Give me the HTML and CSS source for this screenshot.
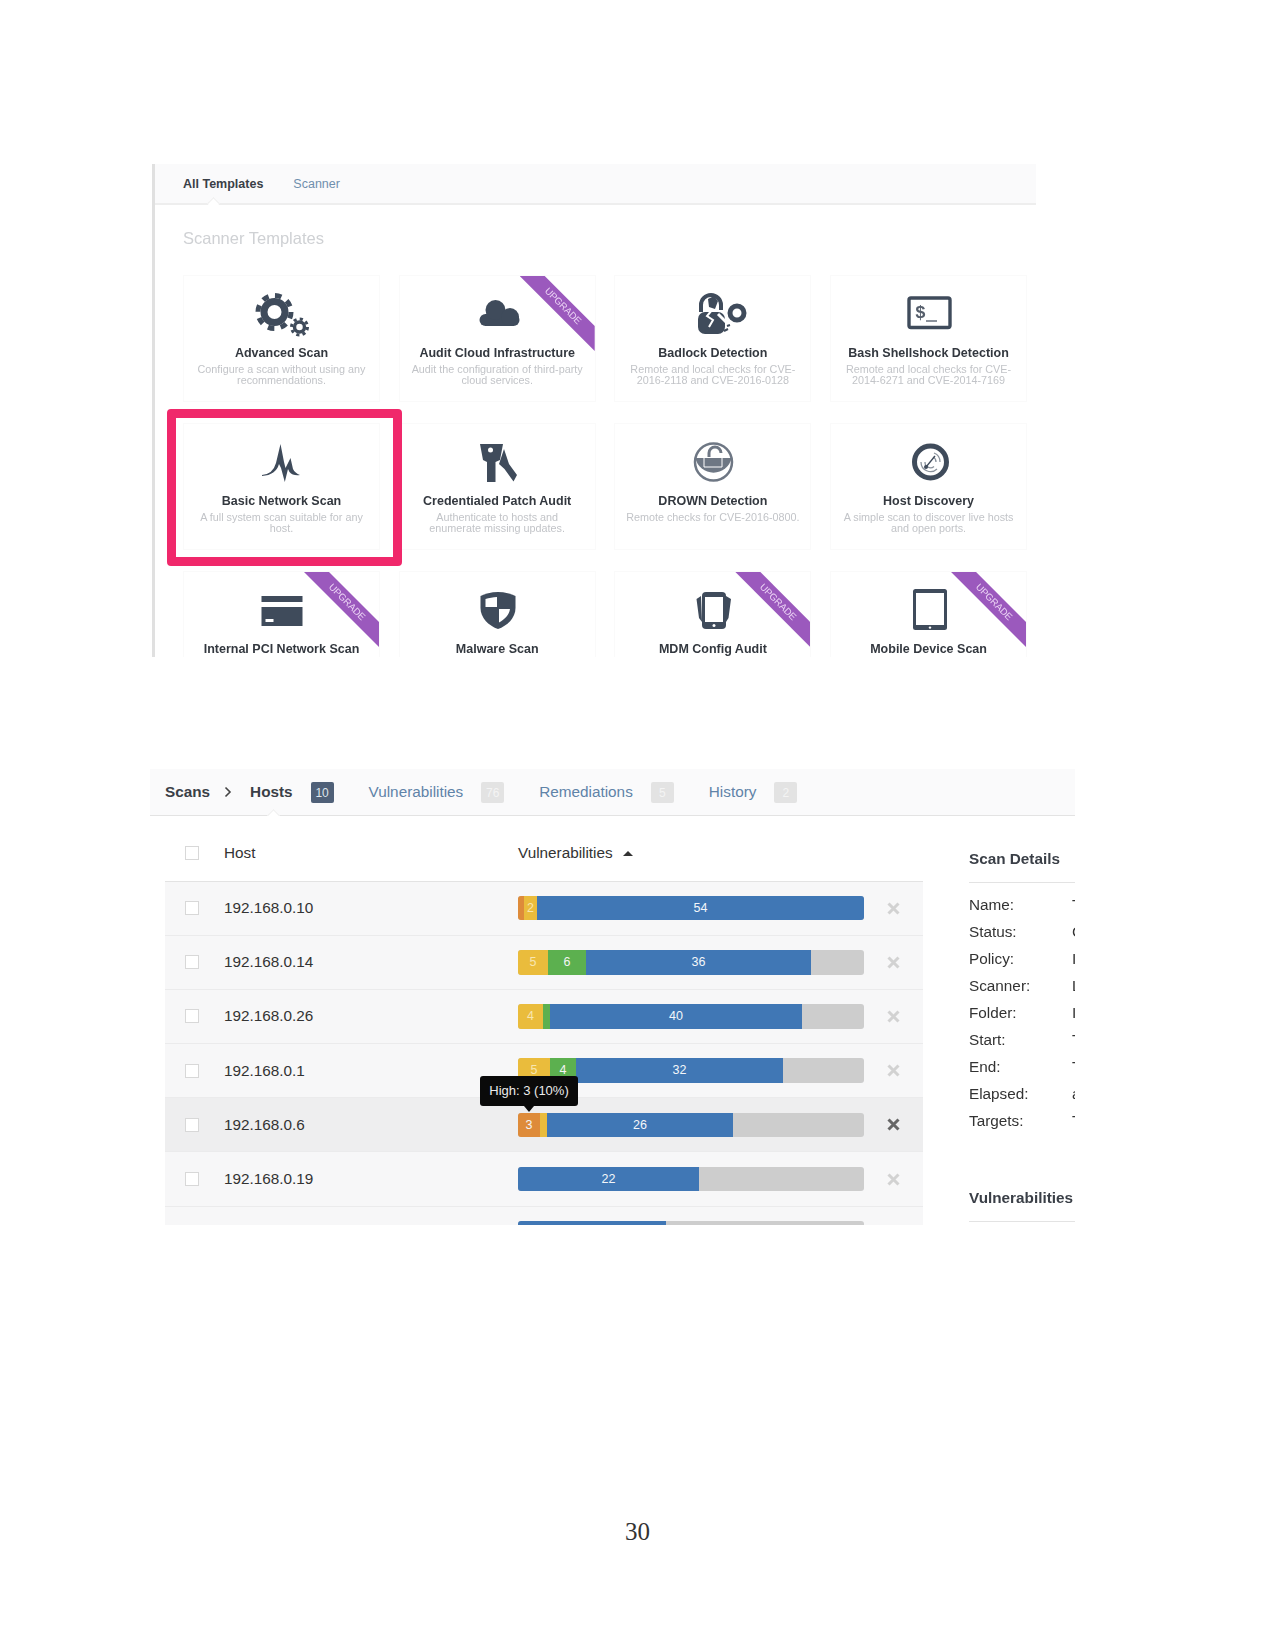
FILE: index.html
```html
<!DOCTYPE html>
<html lang="en">
<head>
    <meta charset="UTF-8">
    <title>Scanner Templates</title>
    <link rel="stylesheet" href="styles.css">
</head>
<body>
<!-- first screenshot: template picker -->
<section class="templates">
    <div class="subnav">
        <span class="active">All Templates</span>
        <span class="link">Scanner</span>
        <i class="notch"></i>
    </div>
    <h2 class="heading">Scanner Templates</h2>
    <div class="grid">
        <div class="card">
            <svg class="icon" viewBox="0 0 64 48">
                <circle class="ring" cx="24.5" cy="22" r="16.5" stroke-width="5" stroke-dasharray="6.5 6.46"/>
                <circle class="ring" cx="24.5" cy="22" r="10.5" stroke-width="7"/>
                <circle class="ring" cx="49.5" cy="37" r="8" stroke-width="3" stroke-dasharray="3.14 3.14"/>
                <circle class="ring" cx="49.5" cy="37" r="5" stroke-width="3.5"/>
            </svg>
            <div class="title">Advanced Scan</div>
            <div class="desc">Configure a scan without using any recommendations.</div>
        </div>
        <div class="card">
            <div class="ribbon"></div><span class="ribbon-text">UPGRADE</span>
            <svg class="icon" viewBox="0 0 64 48">
                <rect class="solid" x="14.5" y="24" width="40" height="12" rx="6"/>
                <circle class="solid" cx="30.5" cy="20" r="10"/>
                <circle class="solid" cx="45" cy="27" r="9"/>
            </svg>
            <div class="title">Audit Cloud Infrastructure</div>
            <div class="desc">Audit the configuration of third-party<br>cloud services.</div>
        </div>
        <div class="card">
            <svg class="icon wide" viewBox="0 0 64 48">
                <path class="line" stroke-width="4" d="M20 22V15a10 10 0 0 1 20 0v5"/>
                <rect class="solid" x="17" y="22" width="27" height="22" rx="7"/>
                <path class="solid" d="M27 9l6-3 4 5-3 8-6-2z"/>
                <path class="cut" stroke-width="2" d="M31 20l-5 6 6 4-4 7"/>
                <path class="cut" stroke-width="3" d="M37 24l8 8"/>
                <circle class="ring" cx="56" cy="23" r="7" stroke-width="5"/>
                <path class="line" stroke-width="2" d="M43 41l4-2M46 36l3-1"/>
            </svg>
            <div class="title">Badlock Detection</div>
            <div class="desc">Remote and local checks for CVE-<br>2016-2118 and CVE-2016-0128</div>
        </div>
        <div class="card">
            <svg class="icon" viewBox="0 0 64 48">
                <rect class="ring" x="12" y="8" width="41" height="29.500" rx="2" stroke-width="3.4"/>
                <text class="prompt" x="18" y="28">$</text>
                <path class="line soft" stroke-width="1.6" d="M29 31h11"/>
            </svg>
            <div class="title">Bash Shellshock Detection</div>
            <div class="desc">Remote and local checks for CVE-<br>2014-6271 and CVE-2014-7169</div>
        </div>

        <div class="card">
            <svg class="icon" viewBox="0 0 64 48">
                <path class="solid" d="M12 37Q23 36 26 25L30.5 6 34 24 35.5 30 40.5 20 43 31Q45 35 50 37 43 38 39.500 34L38 31 34.800 44 31 30 29 26Q26 37 12 38Z"/>
            </svg>
            <div class="title">Basic Network Scan</div>
            <div class="desc">A full system scan suitable for any host.</div>
        </div>
        <div class="card">
            <svg class="icon" viewBox="0 0 64 48">
                <path class="solid" d="M15 6H38L35 22 30.500 24V44H22V24L18 22Z"/>
                <circle class="hole" cx="25.500" cy="12" r="2.500"/>
                <path class="solid" d="M39 11L44 26 52 37 48.500 43.500 39.500 31 34 26Z"/>
            </svg>
            <div class="title">Credentialed Patch Audit</div>
            <div class="desc">Authenticate to hosts and<br>enumerate missing updates.</div>
        </div>
        <div class="card">
            <svg class="icon" viewBox="0 0 64 48">
                <circle class="ring soft" cx="32.500" cy="24" r="18.500" stroke-width="2.500"/>
                <path class="fill-soft" d="M14.400 20A18.500 18.500 0 0 0 50.600 20Z"/>
                <path class="line soft" stroke-width="3" d="M28 19v-4a6 6 0 0 1 12 0"/>
                <path class="cut thin" stroke-width="1" d="M23 20v9h18v-9"/>
            </svg>
            <div class="title">DROWN Detection</div>
            <div class="desc">Remote checks for CVE-2016-0800.</div>
        </div>
        <div class="card">
            <svg class="icon" viewBox="0 0 64 48">
                <circle class="ring" cx="33.500" cy="24" r="16" stroke-width="5"/>
                <path class="line pale" stroke-width="1.300" d="M24 24a9.500 9.500 0 0 0 16 7M43 24a9.500 9.500 0 0 0-6-9"/>
                <path class="line pale" stroke-width="1.300" d="M28 24a5.500 5.500 0 0 0 9 4.500M39 24a5.500 5.500 0 0 0-3-5"/>
                <circle class="solid" cx="29" cy="29" r="2"/>
                <path class="line" stroke-width="1.300" d="M29 29L38 18"/>
            </svg>
            <div class="title">Host Discovery</div>
            <div class="desc">A simple scan to discover live hosts<br>and open ports.</div>
        </div>

        <div class="card">
            <div class="ribbon"></div><span class="ribbon-text">UPGRADE</span>
            <svg class="icon" viewBox="0 0 64 48">
                <rect class="solid" x="11.500" y="10" width="41" height="6"/>
                <rect class="solid" x="11.500" y="21" width="41" height="19"/>
                <rect class="hole" x="15.500" y="33" width="8" height="3"/>
            </svg>
            <div class="title">Internal PCI Network Scan</div>
        </div>
        <div class="card">
            <svg class="icon" viewBox="0 0 64 48">
                <path class="solid" d="M33 6C40 6 46 8 50.500 10V22C50.500 32 42 40 33 43 24 40 15.500 32 15.500 22V10C20 8 26 6 33 6Z"/>
                <path class="hole" d="M32 11V21H20.500V13C24 12 28 11 32 11Z"/>
                <path class="hole" d="M34 23H45C44 29 40 33 34 36.500Z"/>
            </svg>
            <div class="title">Malware Scan</div>
        </div>
        <div class="card">
            <div class="ribbon"></div><span class="ribbon-text">UPGRADE</span>
            <svg class="icon" viewBox="0 0 64 48">
                <path class="solid" d="M20 10L15.500 13 18 32 21 36ZM45 10L50 13 47.500 32 45 36Z"/>
                <rect class="solid" x="21" y="6" width="24" height="37" rx="4"/>
                <rect class="hole" x="24" y="11" width="18" height="25"/>
                <circle class="hole" cx="33" cy="39.500" r="1.500"/>
            </svg>
            <div class="title">MDM Config Audit</div>
        </div>
        <div class="card">
            <div class="ribbon"></div><span class="ribbon-text">UPGRADE</span>
            <svg class="icon" viewBox="0 0 64 48">
                <rect class="solid" x="16" y="3" width="34" height="41" rx="2.500"/>
                <rect class="hole" x="19" y="7" width="28" height="32"/>
                <circle class="hole" cx="33" cy="41.600" r="1.200"/>
            </svg>
            <div class="title">Mobile Device Scan</div>
        </div>
    </div>
    <!-- red marker from the document, sits on top of the card -->
    <div class="marker"></div>
</section>

<!-- second screenshot: hosts table -->
<section class="hosts">
    <div class="tabs">
        <span class="crumb">Scans</span>
        <svg class="chevron" viewBox="0 0 8 12"><path d="M1.500 1.500L6 6 1.500 10.500"/></svg>
        <span class="crumb">Hosts</span>
        <span class="badge dark">10</span>
        <span class="tab">Vulnerabilities</span>
        <span class="badge">76</span>
        <span class="tab">Remediations</span>
        <span class="badge">5</span>
        <span class="tab">History</span>
        <span class="badge">2</span>
        <i class="notch notch-hosts"></i>
    </div>
    <div class="content">
        <div class="table">
            <div class="row head">
                <span class="check"></span>
                <span>Host</span>
                <span class="sort">Vulnerabilities <i class="caret"></i></span>
            </div>
            <div class="row">
                <span class="check"></span>
                <span>192.168.0.10</span>
                <div class="bar">
                    <span class="seg high" style="width:6px"></span>
                    <span class="seg med" style="width:13px">2</span>
                    <span class="seg info" style="width:327px">54</span>
                </div>
                <svg class="del" viewBox="0 0 13 13"><path d="M1.500 1.500L11.500 11.500M11.500 1.500L1.500 11.500"/></svg>
            </div>
            <div class="row">
                <span class="check"></span>
                <span>192.168.0.14</span>
                <div class="bar">
                    <span class="seg med" style="width:30px">5</span>
                    <span class="seg low" style="width:38px">6</span>
                    <span class="seg info" style="width:225px">36</span>
                </div>
                <svg class="del" viewBox="0 0 13 13"><path d="M1.500 1.500L11.500 11.500M11.500 1.500L1.500 11.500"/></svg>
            </div>
            <div class="row">
                <span class="check"></span>
                <span>192.168.0.26</span>
                <div class="bar">
                    <span class="seg med" style="width:25px">4</span>
                    <span class="seg low" style="width:7px"></span>
                    <span class="seg info" style="width:252px">40</span>
                </div>
                <svg class="del" viewBox="0 0 13 13"><path d="M1.500 1.500L11.500 11.500M11.500 1.500L1.500 11.500"/></svg>
            </div>
            <div class="row">
                <span class="check"></span>
                <span>192.168.0.1</span>
                <div class="bar">
                    <span class="seg med" style="width:32px">5</span>
                    <span class="seg low" style="width:26px">4</span>
                    <span class="seg info" style="width:207px">32</span>
                </div>
                <svg class="del" viewBox="0 0 13 13"><path d="M1.500 1.500L11.500 11.500M11.500 1.500L1.500 11.500"/></svg>
            </div>
            <div class="row hover">
                <span class="check"></span>
                <span>192.168.0.6</span>
                <div class="bar">
                    <span class="seg high" style="width:22px">3</span>
                    <span class="seg med" style="width:7px"></span>
                    <span class="seg info" style="width:186px">26</span>
                </div>
                <svg class="del" viewBox="0 0 13 13"><path d="M1.500 1.500L11.500 11.500M11.500 1.500L1.500 11.500"/></svg>
                <div class="tooltip">High: 3 (10%)</div>
            </div>
            <div class="row">
                <span class="check"></span>
                <span>192.168.0.19</span>
                <div class="bar">
                    <span class="seg info" style="width:181px">22</span>
                </div>
                <svg class="del" viewBox="0 0 13 13"><path d="M1.500 1.500L11.500 11.500M11.500 1.500L1.500 11.500"/></svg>
            </div>
            <!-- last row is cut by the screenshot, only the bar top shows -->
            <div class="row">
                <span></span>
                <span></span>
                <div class="bar">
                    <span class="seg info" style="width:148px"></span>
                </div>
            </div>
        </div>
        <aside class="details">
            <h3 class="side-title">Scan Details</h3>
            <dl class="facts">
                <dt>Name:</dt><dd>Test</dd>
                <dt>Status:</dt><dd>Completed</dd>
                <dt>Policy:</dt><dd>Internal</dd>
                <dt>Scanner:</dt><dd>Local</dd>
                <dt>Folder:</dt><dd>Internal</dd>
                <dt>Start:</dt><dd>Today</dd>
                <dt>End:</dt><dd>Today</dd>
                <dt>Elapsed:</dt><dd>a few minutes</dd>
                <dt>Targets:</dt><dd>Test</dd>
            </dl>
            <h3 class="side-title second">Vulnerabilities</h3>
        </aside>
    </div>
</section>

<div class="page-number">30</div>
</body>
</html>
```

FILE: styles.css
```css
body{
    margin: 0;
    background-color: #fff;
    font-family: "Liberation Sans", Arial, sans-serif;
    color: #333;
}

/* template picker */
.templates{
    position: relative;
    box-sizing: border-box;
    width: 884px;
    height: 493px;
    margin: 164px 0 0 152px;
    border-left: 3px solid #e0e0e0;
    overflow: hidden;
    filter: blur(.5px);
}
.subnav{
    position: relative;
    display: flex;
    align-items: center;
    gap: 30px;
    box-sizing: border-box;
    height: 41px;
    padding-left: 28px;
    background-color: #fafafb;
    border-bottom: 2px solid #eee;
    font-size: 12.5px;
}
.active{
    font-weight: bold;
    color: #3a3f47;
}
.link{
    color: #6f8fad;
}
.notch{
    position: absolute;
    left: 54px;
    bottom: -5px;
    width: 8px;
    height: 8px;
    background-color: #fff;
    border-left: 1px solid #eee;
    border-top: 1px solid #eee;
    transform: rotate(45deg);
}
.heading{
    margin: 21px 0 25px 28px;
    font-size: 16.5px;
    line-height: 24px;
    font-weight: normal;
    color: #cfd1d4;
}
.grid{
    display: grid;
    grid-template-columns: repeat(4, 197px);
    grid-auto-rows: 127px;
    column-gap: 18.7px;
    row-gap: 21px;
    margin-left: 28px;
}
.card{
    position: relative;
    box-sizing: border-box;
    padding: 14px 8px 0;
    border: 1px solid #fafafa;
    text-align: center;
    overflow: hidden;
}
.icon{
    display: block;
    width: 64px;
    height: 48px;
    margin: 0 auto;
}
.icon.wide{
    overflow: visible;
}
.solid{
    fill: #3f4b5b;
}
.hole{
    fill: #fff;
}
.ring{
    fill: none;
    stroke: #3f4b5b;
}
.line{
    fill: none;
    stroke: #3f4b5b;
}
.cut{
    fill: none;
    stroke: #fff;
}
.ring.soft, .line.soft{
    stroke: #6e7784;
}
.ring.pale, .line.pale{
    stroke: #8a929c;
}
.fill-soft{
    fill: #6e7784;
}
.prompt{
    font-family: "Liberation Mono", monospace;
    font-size: 18px;
    font-weight: bold;
    fill: #555e6b;
}
.title{
    margin-top: 7px;
    font-size: 12.5px;
    line-height: 16px;
    font-weight: bold;
    color: #33383f;
}
.desc{
    margin-top: 3px;
    font-size: 10.8px;
    line-height: 10.8px;
    color: #c2c4c8;
}
.ribbon{
    position: absolute;
    top: 0;
    right: 0;
    width: 75px;
    height: 75px;
    background-color: #9b59bd;
    clip-path: polygon(0 0, 25px 0, 100% 50px, 100% 100%);
}
.ribbon-text{
    position: absolute;
    top: 24px;
    right: 6px;
    width: 52px;
    font-size: 9.5px;
    line-height: 12px;
    text-align: center;
    color: #ecd5f5;
    transform: rotate(45deg);
}
.marker{
    position: absolute;
    left: 12px;
    top: 245px;
    box-sizing: border-box;
    width: 235px;
    height: 157px;
    border: 9px solid #f0286b;
    border-radius: 4px;
}

/* hosts table */
.hosts{
    width: 925px;
    height: 456px;
    margin: 112px 0 0 150px;
    overflow: hidden;
    filter: blur(.4px);
}
.tabs{
    position: relative;
    display: flex;
    align-items: center;
    box-sizing: border-box;
    height: 47px;
    padding: 0 0 0 15px;
    background-color: #fafafb;
    border-bottom: 1px solid #e3e3e3;
    font-size: 15.3px;
}
.crumb{
    font-weight: bold;
    color: #3a3f47;
}
.chevron{
    width: 8px;
    height: 12px;
    margin: 0 18px 0 14px;
}
.chevron path{
    fill: none;
    stroke: #444;
    stroke-width: 1.6;
}
.tab{
    margin-left: 35px;
    color: #5f83a8;
}
.badge{
    width: 23px;
    height: 21px;
    margin-left: 18px;
    border-radius: 2px;
    background-color: #e3e3e3;
    color: #f4f4f4;
    font-size: 12px;
    line-height: 22px;
    text-align: center;
}
.badge.dark{
    background-color: #4f6078;
    color: #dfe5ec;
}
.notch-hosts{
    left: 119px;
    bottom: -5px;
}
.content{
    display: flex;
    align-items: flex-start;
}
.table{
    width: 758px;
    margin-left: 15px;
    font-size: 15.3px;
}
.row{
    position: relative;
    display: grid;
    grid-template-columns: 59px 294px 346px 59px;
    align-items: center;
    box-sizing: border-box;
    height: 54.2px;
    background-color: #f7f7f8;
    border-bottom: 1px solid #ebebec;
}
.row.head{
    height: 65.5px;
    padding-top: 10px;
    background-color: #fff;
    border-bottom: 1px solid #e3e3e3;
}
.row.hover{
    background-color: #eeeeef;
}
.check{
    box-sizing: border-box;
    width: 14px;
    height: 14px;
    margin-left: 20px;
    background-color: #fff;
    border: 1px solid #d8d8d8;
}
.caret{
    display: inline-block;
    width: 0;
    height: 0;
    margin: 0 0 2px 6px;
    border-left: 5px solid transparent;
    border-right: 5px solid transparent;
    border-bottom: 5px solid #333;
}
.bar{
    display: flex;
    height: 24.5px;
    border-radius: 3px;
    background-color: #cdcdcd;
    overflow: hidden;
}
.seg{
    color: #f3f6fa;
    font-size: 12.5px;
    line-height: 25px;
    text-align: center;
}
.high{
    background-color: #de8b3a;
}
.med{
    background-color: #eabc3c;
    color: #f8e6b0;
}
.high, .low{
    color: #f4f4f4;
}
.low{
    background-color: #5cb04f;
}
.info{
    background-color: #4077b5;
}
.del{
    justify-self: center;
    width: 13px;
    height: 13px;
}
.del path{
    fill: none;
    stroke: #d2d2d2;
    stroke-width: 3;
}
.hover .del path{
    stroke: #666;
}
.tooltip{
    position: absolute;
    left: 315px;
    top: -22px;
    z-index: 2;
    box-sizing: border-box;
    width: 98px;
    height: 30px;
    border-radius: 3px;
    background-color: #0a0a0a;
    color: #ececec;
    font-size: 13px;
    line-height: 30px;
    text-align: center;
}
.tooltip::after{
    content: "";
    position: absolute;
    left: 44px;
    top: 30px;
    border-left: 5px solid transparent;
    border-right: 5px solid transparent;
    border-top: 6px solid #0a0a0a;
}
.details{
    width: 106px;
    margin-left: 46px;
    padding-top: 31px;
    overflow: hidden;
}
.side-title{
    margin: 0;
    padding-bottom: 11px;
    border-bottom: 1px solid #e3e3e3;
    font-size: 15.3px;
    line-height: 24px;
    white-space: nowrap;
    color: #3a3f47;
}
.side-title.second{
    margin-top: 52px;
}
.facts{
    display: grid;
    grid-template-columns: 103px 200px;
    grid-auto-rows: 27px;
    align-items: center;
    margin: 8px 0 0;
    font-size: 15.3px;
    white-space: nowrap;
}
.facts dd{
    margin: 0;
}

.page-number{
    margin-top: 292px;
    font-family: "Liberation Serif", serif;
    font-size: 25px;
    line-height: 30px;
    text-align: center;
}
```
